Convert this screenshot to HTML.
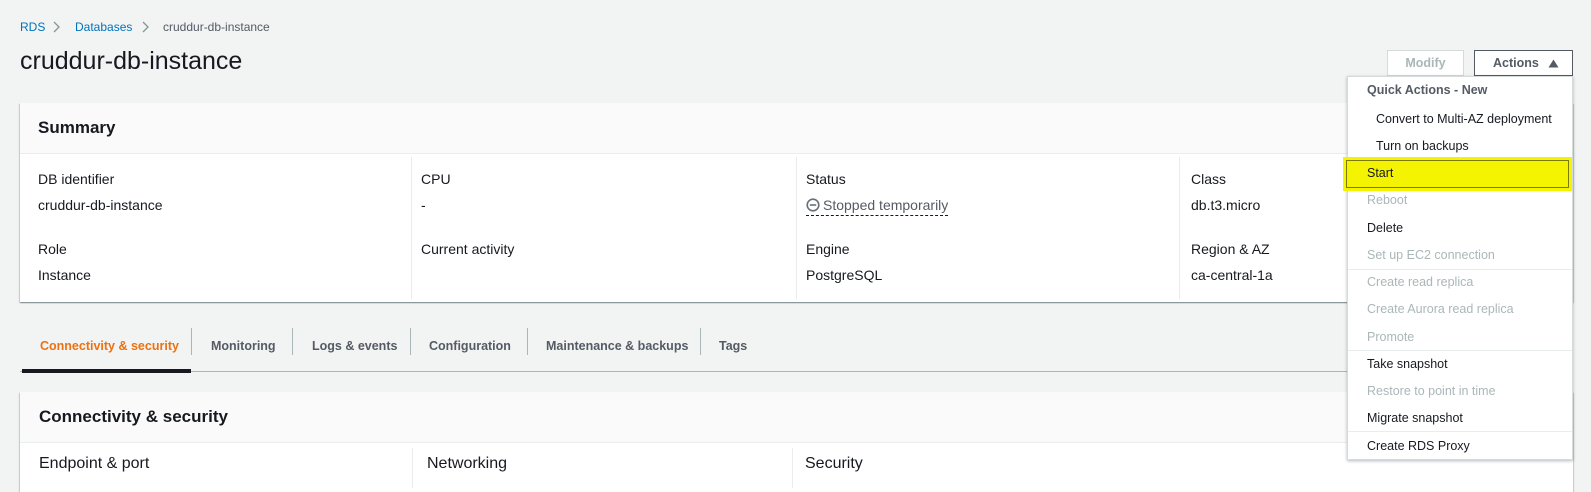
<!DOCTYPE html>
<html><head><meta charset="utf-8"><style>
*{box-sizing:border-box;margin:0;padding:0}
body{width:1591px;height:473px;overflow:hidden;background:#f2f3f3;font-family:"Liberation Sans",sans-serif;color:#16191f;position:relative}
.a{position:absolute;white-space:nowrap}
.bc{top:20px;font-size:12px;color:#0073bb}
.panel{position:absolute;left:20px;width:1553px;background:#fff;box-shadow:0 1px 1px rgba(0,28,36,.3),1px 1px 1px rgba(0,28,36,.15),-1px 1px 1px rgba(0,28,36,.15)}
.ph{height:51px;background:#fafafa;border-bottom:1px solid #eaeded}
.lbl{font-size:14px;color:#16191f}
.dv{position:absolute;width:1px;background:#eaeded}
.tab{top:339px;font-size:12.5px;font-weight:bold;color:#545b64}
.tdv{position:absolute;top:328px;height:27px;width:1px;background:#aab7b8}
.dd{position:absolute;left:1347px;top:76px;width:226px;height:384px;background:#fff;border:1px solid #d5dbdb;box-shadow:0 1px 3px rgba(0,28,36,.3)}
.it{position:absolute;font-size:12.5px;white-space:nowrap;left:19px}
.dis{color:#aab7b8}
.sep{position:absolute;left:0;width:224px;height:1px;background:#eaeded}
.btn{position:absolute;top:50px;height:26px;border:1px solid #545b64;background:#fff;font-size:12.5px;font-weight:bold;text-align:center;line-height:24px}
</style></head><body>
<div class="a bc" style="left:20px">RDS</div>
<svg class="a" style="left:52px;top:21px" width="10" height="12"><path d="M2 1l5 5-5 5" stroke="#879596" stroke-width="1.3" fill="none"/></svg>
<div class="a bc" style="left:75px">Databases</div>
<svg class="a" style="left:141px;top:21px" width="10" height="12"><path d="M2 1l5 5-5 5" stroke="#879596" stroke-width="1.3" fill="none"/></svg>
<div class="a bc" style="left:163px;color:#545b64">cruddur-db-instance</div>
<div class="a" style="left:20px;top:47px;font-size:25px">cruddur-db-instance</div>

<div class="btn" style="left:1387px;width:77px;border-color:#d5dbdb;color:#aab7b8">Modify</div>
<div class="btn" style="left:1474px;width:99px;color:#545b64;text-align:left;padding-left:18px">Actions<svg style="position:absolute;left:73px;top:8px" width="11" height="9"><path d="M0.5 8.5L5.5 0.5L10.5 8.5Z" fill="#545b64"/></svg></div>

<div class="panel" style="top:103px;height:199px">
 <div class="ph"><div class="a" style="left:18px;top:15px;font-size:17px;font-weight:bold">Summary</div></div>
 <div class="dv" style="left:391px;top:54px;height:142px"></div>
 <div class="dv" style="left:776px;top:54px;height:142px"></div>
 <div class="dv" style="left:1159px;top:54px;height:142px"></div>
 <div class="a lbl" style="left:18px;top:68px">DB identifier</div>
 <div class="a lbl" style="left:18px;top:94px">cruddur-db-instance</div>
 <div class="a lbl" style="left:18px;top:138px">Role</div>
 <div class="a lbl" style="left:18px;top:164px">Instance</div>
 <div class="a lbl" style="left:401px;top:68px">CPU</div>
 <div class="a lbl" style="left:401px;top:94px">-</div>
 <div class="a lbl" style="left:401px;top:138px">Current activity</div>
 <div class="a lbl" style="left:786px;top:68px">Status</div>
 <div class="a lbl" style="left:786px;top:94px;color:#545b64;border-bottom:1px dashed #16191f;padding-bottom:2px"><svg width="14" height="14" style="vertical-align:-2px;margin-right:3px"><circle cx="7" cy="7" r="5.8" stroke="#687078" stroke-width="1.6" fill="none"/><path d="M3.8 7h6.4" stroke="#687078" stroke-width="1.6"/></svg>Stopped temporarily</div>
 <div class="a lbl" style="left:786px;top:138px">Engine</div>
 <div class="a lbl" style="left:786px;top:164px">PostgreSQL</div>
 <div class="a lbl" style="left:1171px;top:68px">Class</div>
 <div class="a lbl" style="left:1171px;top:94px">db.t3.micro</div>
 <div class="a lbl" style="left:1171px;top:138px">Region &amp; AZ</div>
 <div class="a lbl" style="left:1171px;top:164px">ca-central-1a</div>
</div>

<div class="a tab" style="left:40px;color:#ec7211">Connectivity &amp; security</div>
<div class="tdv" style="left:191px"></div>
<div class="a tab" style="left:211px">Monitoring</div>
<div class="tdv" style="left:292px"></div>
<div class="a tab" style="left:312px">Logs &amp; events</div>
<div class="tdv" style="left:410px"></div>
<div class="a tab" style="left:429px">Configuration</div>
<div class="tdv" style="left:527px"></div>
<div class="a tab" style="left:546px">Maintenance &amp; backups</div>
<div class="tdv" style="left:700px"></div>
<div class="a tab" style="left:719px">Tags</div>
<div class="a" style="left:20px;top:371px;width:1553px;height:1px;background:#aab7b8"></div>
<div class="a" style="left:22px;top:369px;width:169px;height:4px;background:#16191f"></div>

<div class="panel" style="top:392px;height:100px">
 <div class="ph"><div class="a" style="left:19px;top:15px;font-size:17px;font-weight:bold">Connectivity &amp; security</div></div>
 <div class="dv" style="left:392px;top:56px;height:40px"></div>
 <div class="dv" style="left:772px;top:56px;height:40px"></div>
 <div class="a" style="left:19px;top:63px;font-size:16px">Endpoint &amp; port</div>
 <div class="a" style="left:407px;top:63px;font-size:16px">Networking</div>
 <div class="a" style="left:785px;top:63px;font-size:16px">Security</div>
</div>

<div class="dd">
 <div class="it" style="top:6px;font-weight:bold;color:#545b64">Quick Actions - New</div>
 <div class="it" style="top:35px;left:28px">Convert to Multi-AZ deployment</div>
 <div class="it" style="top:62px;left:28px">Turn on backups</div>
 <div style="position:absolute;left:-5px;top:80px;width:229px;height:34px;background:#f4f400;border:3px solid #f4f400;outline:1px solid #7a7a00;outline-offset:-4px"></div>
 <div class="it" style="top:89px">Start</div>
 <div class="it dis" style="top:116px">Reboot</div>
 <div class="it" style="top:144px">Delete</div>
 <div class="it dis" style="top:171px">Set up EC2 connection</div>
 <div class="sep" style="top:192px"></div>
 <div class="it dis" style="top:198px">Create read replica</div>
 <div class="it dis" style="top:225px">Create Aurora read replica</div>
 <div class="it dis" style="top:253px">Promote</div>
 <div class="sep" style="top:273px"></div>
 <div class="it" style="top:280px">Take snapshot</div>
 <div class="it dis" style="top:307px">Restore to point in time</div>
 <div class="it" style="top:334px">Migrate snapshot</div>
 <div class="sep" style="top:354px"></div>
 <div class="it" style="top:362px">Create RDS Proxy</div>
</div>
</body></html>
